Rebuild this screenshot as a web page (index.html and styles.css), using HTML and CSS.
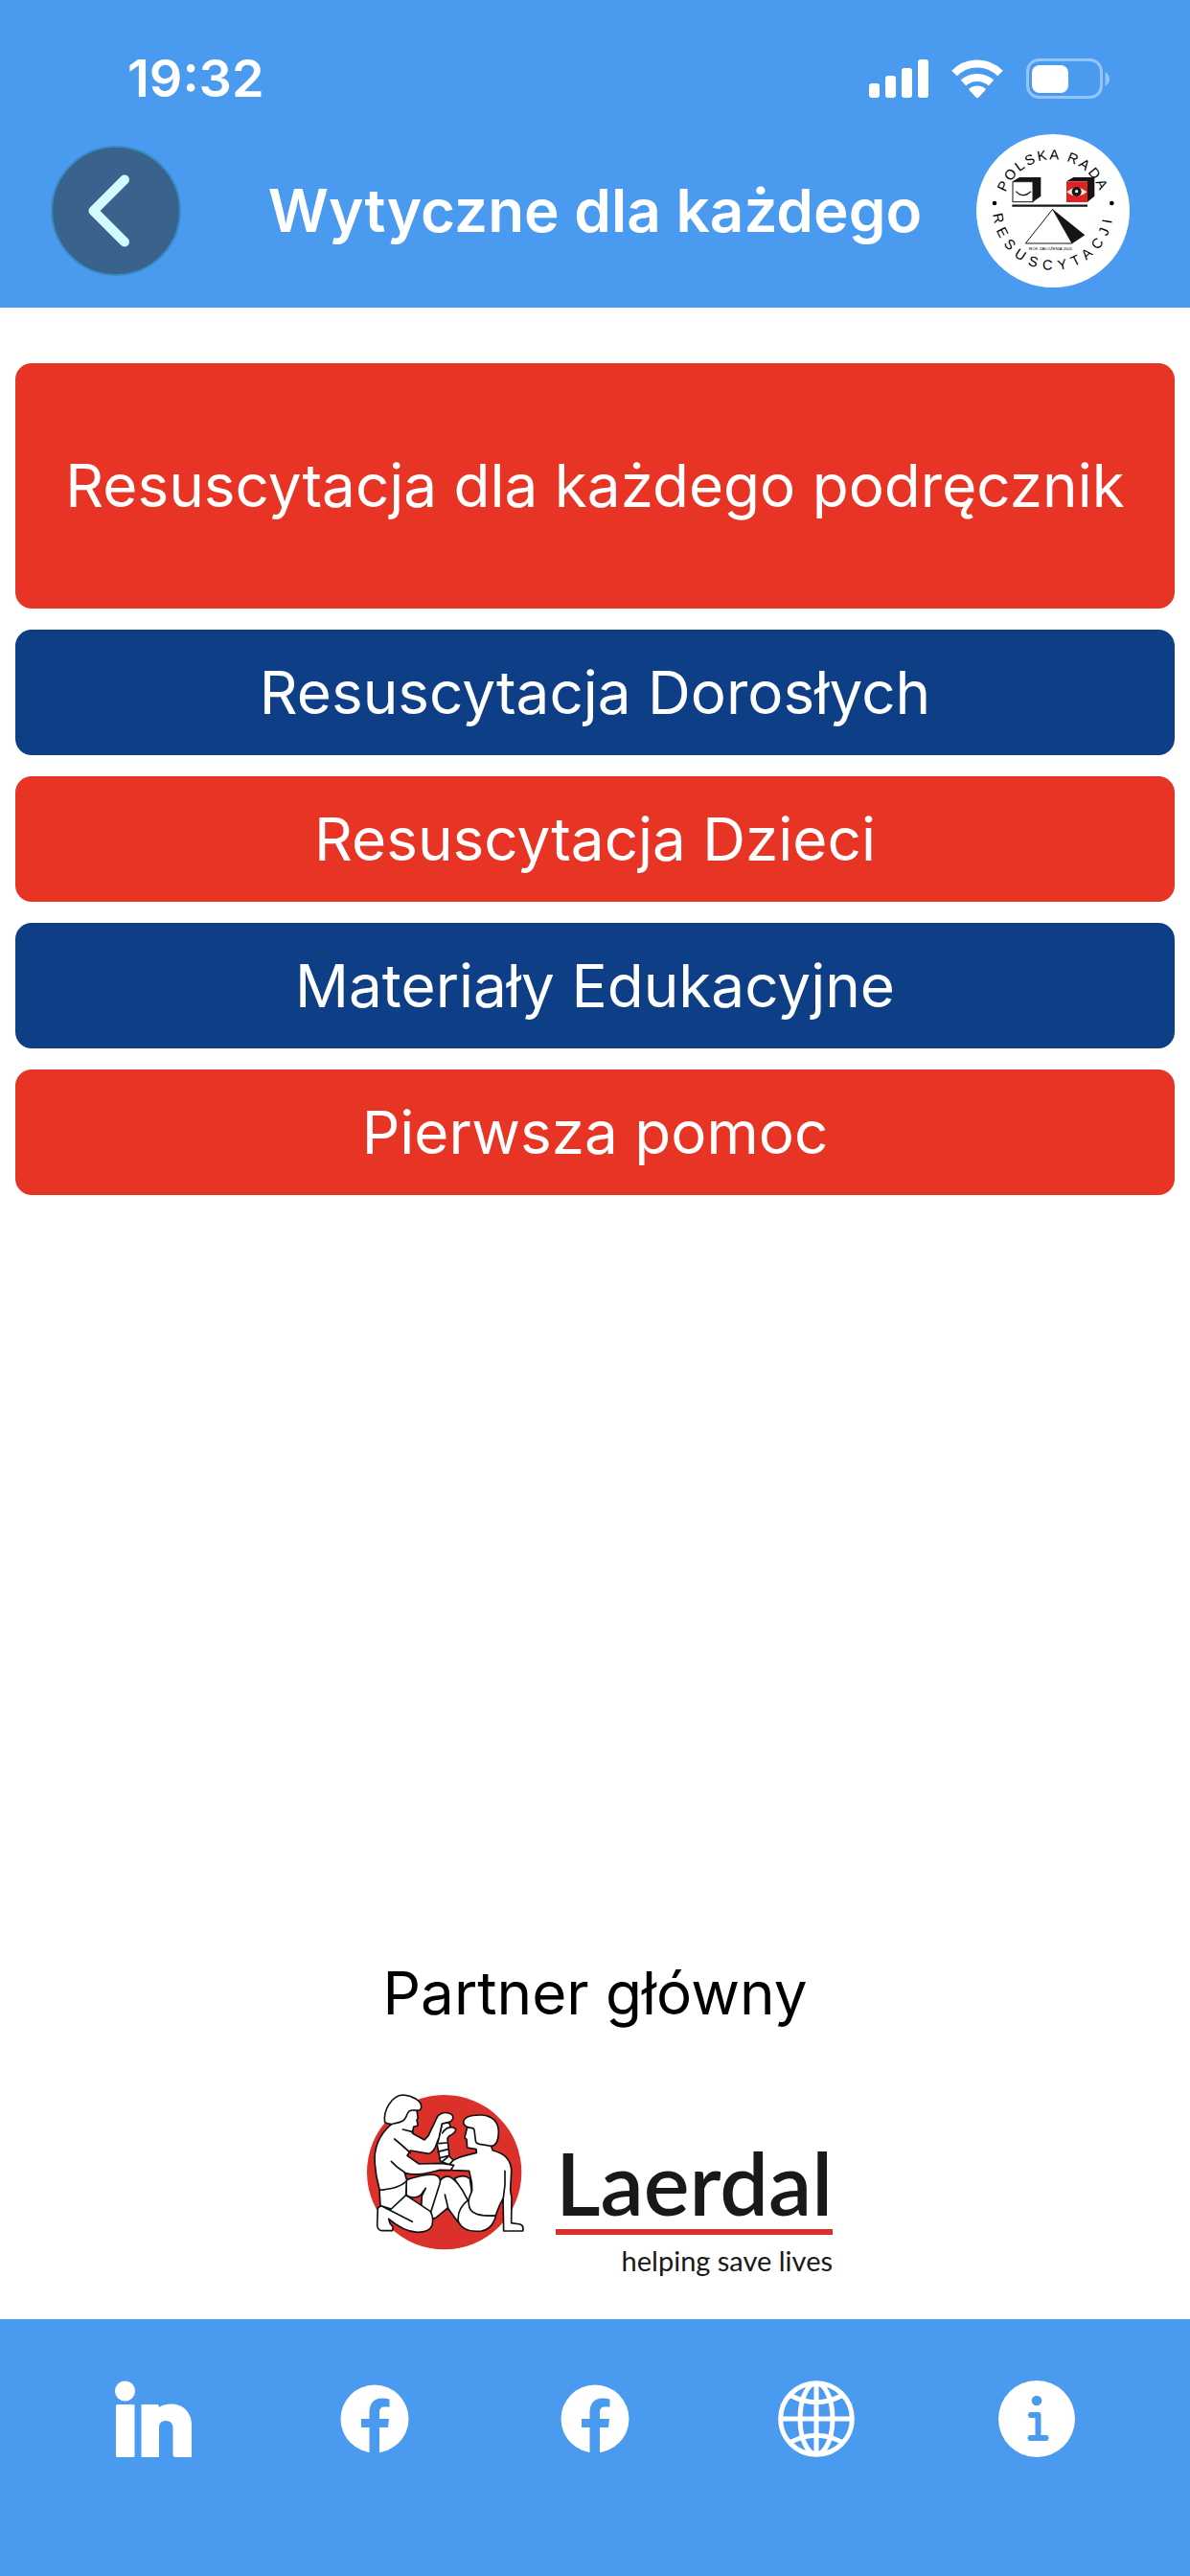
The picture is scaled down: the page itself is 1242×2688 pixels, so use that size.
FILE: index.html
```html
<!DOCTYPE html>
<html lang="pl">
<head>
<meta charset="utf-8">
<meta name="viewport" content="width=device-width, initial-scale=1">
<title>Wytyczne dla każdego</title>
<link rel="stylesheet" href="styles.css">
</head>
<body>
<div class="app">
  <header class="header">
    <div class="status">
      <time class="status-time">19:32</time>
      <div class="status-icons">
        <svg width="62" height="42" viewBox="0 0 62 42" fill="#fff" aria-hidden="true">
          <rect x="0" y="26" width="11" height="15" rx="3"/>
          <rect x="17" y="18" width="11" height="23" rx="3"/>
          <rect x="34" y="10" width="11" height="31" rx="3"/>
          <rect x="51" y="1" width="11" height="40" rx="3"/>
        </svg>
        <svg width="54" height="42" viewBox="0 0 54 42" aria-hidden="true">
          <g fill="none" stroke="#fff" stroke-width="8">
            <path d="M3 15.5C16.500 2 37.500 2 51 15.500"/>
            <path d="M12.500 25.500C20.500 18 33.500 18 41.500 25.500"/>
          </g>
          <path d="M18.500 31.500C23 27.500 31 27.500 35.500 31.500Q36 32.500 35 33.500L28.500 40.500Q27 42 25.500 40.500L19 33.500Q18 32.500 18.500 31.500Z" fill="#fff"/>
        </svg>
        <svg width="88" height="42" viewBox="0 0 88 42" aria-hidden="true">
          <rect x="1.500" y="1.500" width="77" height="39" rx="12" fill="none" stroke="#93c5fb" stroke-width="3"/>
          <rect x="6" y="7" width="38" height="29" rx="8" fill="#fff"/>
          <path d="M82.500 14Q87 17 87 21.500T82.500 29Z" fill="#93c5fb"/>
        </svg>
      </div>
    </div>
    <div class="nav">
      <button class="back" type="button" aria-label="Wstecz">
        <svg width="48" height="80" viewBox="0 0 48 80" fill="none" stroke="#d3fcff" stroke-width="10" stroke-linecap="round" stroke-linejoin="round" aria-hidden="true">
          <path d="M38 7.500L5.500 40L38 72.500"/>
        </svg>
      </button>
      <h1 class="title">Wytyczne dla każdego</h1>
      <svg class="council" viewBox="27 30 480 480" role="img" aria-label="Polska Rada Resuscytacji">
        <defs>
          <path id="arc-top" d="M109 267A158 158 0 0 1 425 267"/>
          <path id="arc-bottom" d="M79 247V267A188 188 0 0 0 455 267V247"/>
        </defs>
        <circle cx="267" cy="270" r="240" fill="#fff"/>
        <text class="ring"><textPath href="#arc-top" startOffset="50%" text-anchor="middle">POLSKA RADA</textPath></text>
        <text class="ring ring-wide"><textPath href="#arc-bottom" startOffset="50%" text-anchor="middle">RESUSCYTACJI</textPath></text>
        <circle cx="84" cy="246" r="7"/>
        <circle cx="451" cy="246" r="7"/>
        <path d="M140 178L162 165H229V224L204 242V178Z" fill="#161414"/>
        <rect x="141" y="179" width="63" height="63" fill="#fff" stroke="#161414" stroke-width="3"/>
        <path d="M151 209Q172 233 198 209" fill="none" stroke="#161414" stroke-width="4"/>
        <path d="M309 178L331 165H397V224L375 242V178Z" fill="#161414"/>
        <rect x="309" y="178" width="66" height="65" fill="#dd2423"/>
        <path d="M310 211Q341 183 373 211Q341 237 310 211Z" fill="#ffe9dd"/>
        <circle cx="341" cy="210" r="15" fill="#161414"/>
        <circle cx="341" cy="209" r="5" fill="#fff"/>
        <path d="M139 254H375" stroke="#161414" stroke-width="7"/>
        <path d="M266 265L367 346L327 373Z" fill="#161414"/>
        <path d="M266 265L181 372H327Z" fill="#fff" stroke="#161414" stroke-width="3"/>
        <text class="founded" x="260" y="394" text-anchor="middle">ROK ZAŁOŻENIA 2001</text>
      </svg>
    </div>
  </header>

  <main class="main">
    <nav class="menu">
      <a class="item item-large red" href="#podrecznik">Resuscytacja dla każdego podręcznik</a>
      <a class="item blue" href="#dorosli">Resuscytacja Dorosłych</a>
      <a class="item red" href="#dzieci">Resuscytacja Dzieci</a>
      <a class="item blue" href="#materialy">Materiały Edukacyjne</a>
      <a class="item red" href="#pierwsza-pomoc">Pierwsza pomoc</a>
    </nav>
    <section class="partner">
      <h2 class="partner-title">Partner główny</h2>
      <div class="laerdal">
        <svg class="emblem" viewBox="36 36 510 510" role="img" aria-label="Laerdal">
          <circle cx="284" cy="290" r="242" fill="#dc302a"/>
          <g fill="#fff" stroke="#111" stroke-width="5" stroke-linejoin="round" stroke-linecap="round">
            <path d="M316 310Q342 294 364 310L370 350L360 382Z"/>
            <path d="M244 434L240 410L270 318Q282 300 300 304Q318 312 340 345L360 382L332 422L327 446L295 402L256 434Z"/>
            <path d="M286 360L296 402" fill="none"/>
            <path d="M165 314C200 303 238 293 260 300Q275 308 270 326L241 418L212 402L214 364L226 340L210 362Q192 376 165 362Z"/>
            <path d="M81 346L84 396L76 402L74 456Q76 472 88 473H122L124 462L114 450L110 436C140 462 165 476 200 478Q238 478 246 456Q252 430 240 412L164 362L166 316Q130 340 81 346Z"/>
            <path d="M84 395L118 405L164 362M84 394L184 445" fill="none"/>
            <path d="M356 148L348 182L354 187L356 213L384 218L385 229C350 238 330 240 310 254L298 268L310 284L362 286L370 322L371 348L362 370Q358 392 362 402C372 424 410 428 444 427L458 392L468 372L470 474H530Q534 458 522 453L494 449L495 370L491 345L494 292C496 250 470 230 436 222L430 206L380 150Z"/>
            <path d="M474 286L474 330L467 385" fill="none"/>
            <path d="M360 376C335 395 325 420 328 444C340 474 370 477 400 474C428 470 440 448 446 426C400 428 362 424 361 390Z"/>
            <path d="M344 134C345 118 362 110 402 111C440 115 455 138 454 168C453 192 447 208 430 208L394 202Q382 200 382 190L378 158Q376 150 366 151Q345 148 344 134Z"/>
            <path d="M277 138L299 134L304 149Q320 150 320 158Q318 168 300 176L294 184L300 240L312 252L300 266L272 256L262 205Z"/>
            <path d="M278 168Q286 152 304 149M268 200L293 198M264 226L296 218M268 246L298 238M276 258L296 242" fill="none"/>
            <path d="M118 140C78 175 62 215 67 265C70 310 78 330 82 346C112 344 150 336 167 316L160 292C200 304 240 290 270 283L304 284L314 268L275 262L205 264L168 238L178 222L236 232Q248 228 256 212L268 180L277 138L300 133L308 128Q318 112 300 106Q280 98 263 115L234 176L222 189L184 168L188 148L202 144L198 126L202 122L198 96L150 90Z"/>
            <path d="M128 186Q160 212 178 230M118 256Q136 276 160 290M154 156L186 164" fill="none"/>
            <path d="M98 134C92 98 118 50 155 48C182 50 214 66 212 86Q210 98 202 96L182 96C166 98 170 112 160 124C150 138 132 134 118 140Q104 138 98 134Z"/>
          </g>
        </svg>
        <div class="wordmark">
          <span class="brand">Laerdal</span>
          <span class="slogan">helping save lives</span>
        </div>
      </div>
    </section>
  </main>

  <footer class="footer">
    <a class="social" href="#linkedin" aria-label="LinkedIn">
      <svg viewBox="0 0 80 80" fill="#fff" aria-hidden="true">
        <circle cx="10.500" cy="11" r="10.500"/>
        <rect x="1" y="25" width="19.500" height="55" rx="1.500"/>
        <path d="M28.500 25H44Q46 25 46 28Q51 24 61 24.500C74 26 80 36 80 46V80H63Q60.500 80 60.500 77V49Q60 42 53 42T46 49V80H28.500Q27.500 80 27.500 79V26Q27.500 25 28.500 25Z"/>
      </svg>
    </a>
    <a class="social" href="#facebook" aria-label="Facebook">
      <svg viewBox="0 0 80 80" aria-hidden="true">
        <circle cx="40" cy="40" r="35.500" fill="#fff"/>
        <path d="M34.500 78V49H26V40H34.500V34C34.500 24 39 18.500 48 18.500Q52 18.500 55.500 19.500V27.500H50Q45 27.500 45 33V40H55L54 49H45V78Z" fill="#4a9bef"/>
      </svg>
    </a>
    <a class="social" href="#facebook-kursy" aria-label="Facebook – kursy">
      <svg viewBox="0 0 80 80" aria-hidden="true">
        <circle cx="40" cy="40" r="35.500" fill="#fff"/>
        <path d="M34.500 78V49H26V40H34.500V34C34.500 24 39 18.500 48 18.500Q52 18.500 55.500 19.500V27.500H50Q45 27.500 45 33V40H55L54 49H45V78Z" fill="#4a9bef"/>
      </svg>
    </a>
    <a class="social" href="#www" aria-label="Strona internetowa">
      <svg viewBox="0 0 80 80" fill="none" stroke="#fff" stroke-width="5" aria-hidden="true">
        <circle cx="40" cy="40" r="37.300"/>
        <ellipse cx="40" cy="40" rx="17" ry="37"/>
        <path d="M40 3V77M3 40H77M13 15.500Q40 30 67 15.500M13 64.500Q40 50 67 64.500"/>
      </svg>
    </a>
    <a class="social" href="#info" aria-label="Informacje">
      <svg viewBox="0 0 80 80" aria-hidden="true">
        <circle cx="40" cy="40" r="40" fill="#fff"/>
        <circle cx="40" cy="21" r="5.300" fill="#4a9bef"/>
        <path d="M34 36H41.500V60M33.500 60H49.500" fill="none" stroke="#4a9bef" stroke-width="6" stroke-linecap="round" stroke-linejoin="round"/>
      </svg>
    </a>
  </footer>
</div>
</body>
</html>
```
FILE: styles.css
```css
* {
  box-sizing: border-box;
}

body {
  margin: 0;
  background: #fff;
  color: #000;
  font-family: Inter, "Liberation Sans", sans-serif;
}

.app {
  display: flex;
  flex-direction: column;
  min-height: 100vh;
}

.header {
  padding: 54px 53px 21px;
  background: #4a9bef;
  color: #fff;
}

.status {
  display: flex;
  justify-content: space-between;
  align-items: center;
  padding: 0 30px 0 80px;
}

.status-time {
  font-size: 54px;
  font-weight: 600;
  line-height: 56px;
}

.status-icons {
  display: flex;
  gap: 24px;
}

.nav {
  display: grid;
  grid-template-columns: 1fr auto 1fr;
  align-items: center;
  margin-top: 30px;
}

.back {
  display: grid;
  place-items: center;
  width: 136px;
  height: 136px;
  padding: 0 10px 0 0;
  border: 2px solid #3a8cc4;
  border-radius: 50%;
  background: #39638d;
}

.title {
  margin: 0;
  font-size: 62px;
  font-weight: 600;
  line-height: 80px;
}

.council {
  justify-self: end;
  width: 160px;
  height: 160px;
  margin-right: 10px;
}

.ring {
  font-family: "Liberation Sans", sans-serif;
  font-size: 44px;
  letter-spacing: 0.16em;
}

.ring-wide {
  letter-spacing: 0.44em;
}

.founded {
  font-family: "Liberation Sans", sans-serif;
  font-size: 13px;
}

.main {
  display: flex;
  flex: 1;
  flex-direction: column;
  justify-content: space-between;
  padding: 58px 16px 41px;
}

.menu {
  display: grid;
  gap: 22px;
}

.item {
  display: grid;
  place-items: center;
  min-height: 131px;
  border-radius: 17px;
  color: #fff;
  font-size: 62px;
  line-height: 80px;
  text-align: center;
  text-decoration: none;
}

.item-large {
  min-height: 256px;
}

.red {
  background: #e83424;
}

.blue {
  background: #0d3e86;
}

.partner {
  display: grid;
  justify-items: center;
  gap: 62px;
}

.partner-title {
  margin: 0;
  font-size: 62px;
  font-weight: 400;
  line-height: 80px;
}

.laerdal {
  display: flex;
  align-items: flex-start;
  gap: 29px;
  padding-left: 8px;
}

.emblem {
  width: 170px;
  height: 170px;
}

.wordmark {
  display: grid;
  gap: 7px;
  padding-top: 46px;
  color: #191919;
  font-family: Lato, "Open Sans", sans-serif;
}

.brand {
  border-bottom: 6px solid #d6302f;
  font-size: 90px;
  font-weight: 600;
  line-height: 98px;
}

.slogan {
  font-size: 29px;
  line-height: 40px;
  text-align: right;
}

.footer {
  display: flex;
  justify-content: space-between;
  padding: 64px 120px 124px;
  background: #4a9bef;
}

.social,
.social svg {
  display: block;
  width: 80px;
  height: 80px;
}
```
